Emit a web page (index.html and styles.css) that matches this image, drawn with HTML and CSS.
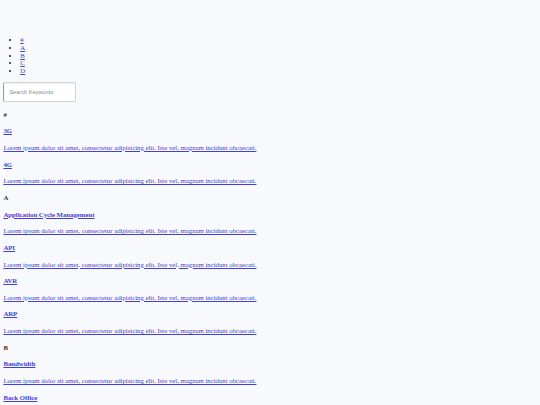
FILE: index.html
```html
<!DOCTYPE html>
<html>
<head>
<meta charset="utf-8">
<link rel="stylesheet" href="styles.css">
</head>
<body>
<div class="page">
  <div class="topbar"></div>
  <ul class="letters">
    <li><a href="#hash">#</a></li>
    <li><a href="#a">A</a></li>
    <li><a href="#b">B</a></li>
    <li><a href="#c">C</a></li>
    <li><a href="#d">D</a></li>
  </ul>
  <input class="search" type="text" placeholder="Search Keywords">
  <h4 class="letter">#</h4>
  <h4 class="term"><a href="#">3G</a></h4>
  <p class="desc"><a href="#">Lorem ipsum dolor sit amet, consectetur adipisicing elit. Iste vel, magnam incidunt obcaecati.</a></p>
  <h4 class="term"><a href="#">4G</a></h4>
  <p class="desc"><a href="#">Lorem ipsum dolor sit amet, consectetur adipisicing elit. Iste vel, magnam incidunt obcaecati.</a></p>
  <h4 class="letter">A</h4>
  <h4 class="term"><a href="#">Application Cycle Management</a></h4>
  <p class="desc"><a href="#">Lorem ipsum dolor sit amet, consectetur adipisicing elit. Iste vel, magnam incidunt obcaecati.</a></p>
  <h4 class="term"><a href="#">API</a></h4>
  <p class="desc"><a href="#">Lorem ipsum dolor sit amet, consectetur adipisicing elit. Iste vel, magnam incidunt obcaecati.</a></p>
  <h4 class="term"><a href="#">AVR</a></h4>
  <p class="desc"><a href="#">Lorem ipsum dolor sit amet, consectetur adipisicing elit. Iste vel, magnam incidunt obcaecati.</a></p>
  <h4 class="term"><a href="#">ARP</a></h4>
  <p class="desc"><a href="#">Lorem ipsum dolor sit amet, consectetur adipisicing elit. Iste vel, magnam incidunt obcaecati.</a></p>
  <h4 class="letter">B</h4>
  <h4 class="term"><a href="#">Bandwidth</a></h4>
  <p class="desc"><a href="#">Lorem ipsum dolor sit amet, consectetur adipisicing elit. Iste vel, magnam incidunt obcaecati.</a></p>
  <h4 class="term"><a href="#">Back Office</a></h4>
  <p class="desc"><a href="#">Lorem ipsum dolor sit amet, consectetur adipisicing elit. Iste vel, magnam incidunt obcaecati.</a></p>
</div>
</body>
</html>
```

FILE: styles.css
```css
html {
  background: #f8f9fd;
}
body {
  margin: 0;
  font-family: "Liberation Serif", "Times New Roman", serif;
  color: #222;
}
.page {
  margin: 3.375px;
  font-size: 6.75px;
  line-height: 7.76px;
}
.topbar {
  height: 26px;
}
.letters {
  margin: 6.75px 0;
  padding-left: 16.9px;
}
.letters a,
.term a,
.desc a {
  color: #4040dc;
}
.search {
  display: block;
  width: 73px;
  height: 20px;
  box-sizing: border-box;
  margin: 0;
  padding: 0 5px;
  border: 1px solid #d3d3d7;
  border-left-color: #a0a0a4;
  border-radius: 1.5px;
  background: #fff;
  box-shadow: inset 1px 1px 1px rgba(0, 0, 0, 0.06);
  font-family: "Liberation Sans", Arial, sans-serif;
  font-size: 5.6px;
}
.search::placeholder {
  color: #8a8a8e;
}
h4 {
  font-size: 6.75px;
  margin: 8.9px 0;
}
.letter {
  color: #333;
}
.desc {
  margin: 6.75px 0;
}
```
